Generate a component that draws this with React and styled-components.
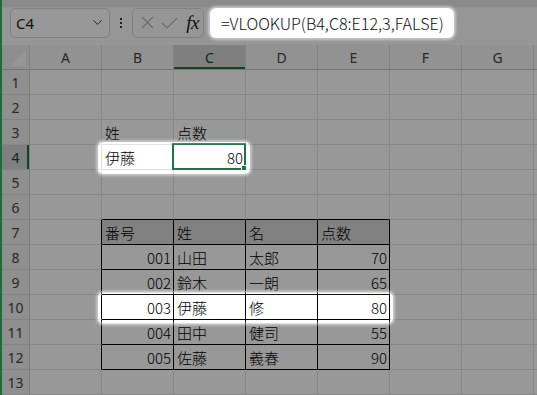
import React from "react";
import styled, { createGlobalStyle } from "styled-components";
import { ChevronDown } from "lucide-react";

const COLUMNS = ["A", "B", "C", "D", "E", "F", "G", ""];
const ROW_COUNT = 13;
const GREEN = "#217346";

// sheet contents, keyed by cell address
const values = {
  B3: { v: "姓" },
  C3: { v: "点数" },
  B4: { v: "伊藤" },
  C4: { v: "80", right: true },
  B7: { v: "番号" },
  C7: { v: "姓" },
  D7: { v: "名" },
  E7: { v: "点数" },
};

const scores = [
  ["001", "山田", "太郎", "70"],
  ["002", "鈴木", "一朗", "65"],
  ["003", "伊藤", "修", "80"],
  ["004", "田中", "健司", "55"],
  ["005", "佐藤", "義春", "90"],
];

scores.forEach((row, i) => {
  const r = 8 + i;
  values[`B${r}`] = { v: row[0], right: true };
  values[`C${r}`] = { v: row[1] };
  values[`D${r}`] = { v: row[2] };
  values[`E${r}`] = { v: row[3], right: true };
});

// spotlight holes, in window coordinates
const spots = [
  { x: 208, y: 8, w: 244, h: 30, r: 6 },
  { x: 96, y: 142, w: 152, h: 32, r: 5 },
  { x: 96, y: 292.5, w: 295, h: 31, r: 5 },
];

const inTable = (col, row) => col >= 1 && col <= 4 && row >= 7 && row <= 12;

const GlobalStyle = createGlobalStyle`
  html, body { margin: 0; padding: 0; background: #fff; }
  body { font-family: "Noto Sans", sans-serif; }
`;

const Frame = styled.div`
  display: flex;
  width: 537px;
  height: 395px;
  overflow: hidden;
`;

const GreenEdge = styled.div`
  width: 2px;
  flex-shrink: 0;
  background: #1f6b3c;
`;

const Window = styled.div`
  position: relative;
  flex: 1;
  display: flex;
  flex-direction: column;
  background: #fcfcfc;
`;

const RibbonEdge = styled.div`
  height: 7px;
  background: #e8e8e8;
  border-bottom: 1px solid #f4f4f4;
`;

const FormulaBar = styled.div`
  height: 38px;
  box-sizing: border-box;
  display: flex;
  align-items: flex-start;
  padding-left: 8px;
`;

const NameBox = styled.div`
  width: 100px;
  height: 30px;
  box-sizing: border-box;
  border: 1px solid #d8d8d8;
  border-radius: 5px;
  background: #fff;
  display: flex;
  align-items: center;
  justify-content: space-between;
  padding: 0 4px 0 5px;
  font: 15px "Noto Sans", sans-serif;
  color: #1a1a1a;
`;

const Dots = styled.div`
  width: 2px;
  height: 30px;
  margin: 0 10px;
  display: flex;
  flex-direction: column;
  justify-content: center;
  gap: 2px;
  span {
    width: 2px;
    height: 2px;
    background: #3a3a3a;
  }
`;

const FxBox = styled.div`
  width: 72px;
  height: 30px;
  box-sizing: border-box;
  border: 1px solid #d8d8d8;
  border-radius: 5px;
  display: flex;
  align-items: center;
  padding: 0 4px 0 8px;
  gap: 7px;
`;

const FxLabel = styled.span`
  margin-left: auto;
  font: italic 19px "Liberation Serif", serif;
  color: #1a1a1a;
  letter-spacing: -0.5px;
  line-height: 1;
`;

const FormulaInput = styled.div`
  width: 244px;
  height: 30px;
  margin-left: 4px;
  box-sizing: border-box;
  background: #fff;
  border-radius: 6px;
  display: flex;
  align-items: center;
  padding-left: 13px;
  font: 300 16.1px "Noto Sans CJK JP", sans-serif;
  color: #111;
  white-space: nowrap;
`;

const Sheet = styled.div`
  display: grid;
  grid-template-columns: 28px repeat(7, 72px) 1fr;
  grid-auto-rows: 25px;
`;

const Corner = styled.div`
  position: relative;
  background: #eeeeee;
  border-right: 1px solid #dadada;
  border-bottom: 1px solid #c4c4c4;
  &::after {
    content: "";
    position: absolute;
    right: 3px;
    bottom: 3px;
    width: 0;
    height: 0;
    border-left: 16px solid transparent;
    border-bottom: 16px solid #fbfbfb;
  }
`;

const ColHead = styled.div`
  box-sizing: border-box;
  background: ${(p) => (p.$active ? "#d6d6d6" : "#f5f5f5")};
  border-right: 1px solid #dadada;
  border-bottom: 1px solid #c4c4c4;
  box-shadow: ${(p) => (p.$active ? `inset 0 -2px ${GREEN}` : "none")};
  display: flex;
  align-items: center;
  justify-content: center;
  font: 14px "Noto Sans", sans-serif;
  color: ${(p) => (p.$active ? "#0f4a2a" : "#444")};
`;

const RowHead = styled.div`
  box-sizing: border-box;
  background: ${(p) => (p.$active ? "#d6d6d6" : "#f0f0f0")};
  border-right: 1px solid #cfcfcf;
  border-bottom: 1px solid #dedede;
  box-shadow: ${(p) => (p.$active ? `inset -2px 0 ${GREEN}` : "none")};
  display: flex;
  align-items: center;
  justify-content: center;
  font: 14px "Noto Sans", sans-serif;
  color: ${(p) => (p.$active ? "#0f4a2a" : "#444")};
`;

const Cell = styled.div`
  position: relative;
  box-sizing: border-box;
  background: ${(p) => p.$fill || "#fff"};
  border-right: 1px solid ${(p) => (p.$edgeRight ? "#000" : "#e1e1e1")};
  border-bottom: 1px solid ${(p) => (p.$edgeBottom ? "#000" : "#e1e1e1")};
  display: flex;
  align-items: center;
  justify-content: ${(p) => (p.$right ? "flex-end" : "flex-start")};
  padding: 1px 2px 0 3px;
  font: 300 15px "Noto Sans CJK JP", sans-serif;
  line-height: 1;
  color: #000;
  white-space: nowrap;
`;

const Selection = styled.div`
  position: absolute;
  top: -2px;
  left: -2px;
  right: -1px;
  bottom: -1px;
  border: 2px solid ${GREEN};
  z-index: 2;
  pointer-events: none;
`;

const FillHandle = styled.div`
  position: absolute;
  right: -3px;
  bottom: -3px;
  width: 6px;
  height: 6px;
  box-sizing: border-box;
  background: ${GREEN};
  border: 1px solid #fff;
  z-index: 3;
`;

const Overlay = styled.svg`
  position: absolute;
  left: 0;
  top: 0;
  pointer-events: none;
  z-index: 10;
`;

function CrossIcon() {
  return (
    <svg width="13" height="13" viewBox="0 0 13 13">
      <path d="M1 1 L12 12 M12 1 L1 12" stroke="#b5b5b5" strokeWidth="1.2" fill="none" />
    </svg>
  );
}

function CheckIcon() {
  return (
    <svg width="17" height="12" viewBox="0 0 17 12">
      <path d="M1 6 L6 11 L16 1" stroke="#b5b5b5" strokeWidth="1.2" fill="none" />
    </svg>
  );
}

function SpotlightOverlay() {
  return (
    <Overlay width="535" height="395">
      <defs>
        <mask id="holes">
          <rect x="0" y="0" width="535" height="395" fill="#fff" />
          {spots.map((s) => (
            <rect key={`${s.x}-${s.y}`} x={s.x} y={s.y} width={s.w} height={s.h} rx={s.r} fill="#000" />
          ))}
        </mask>
        <filter id="soft" x="-10%" y="-50%" width="120%" height="200%">
          <feGaussianBlur stdDeviation="1.2" />
        </filter>
      </defs>
      <rect x="0" y="0" width="535" height="395" fill="#000" opacity="0.4" mask="url(#holes)" />
      {spots.map((s) => (
        <rect
          key={`g-${s.x}-${s.y}`}
          x={s.x - 0.5}
          y={s.y - 0.5}
          width={s.w + 1}
          height={s.h + 1}
          rx={s.r + 0.5}
          fill="none"
          stroke="#fff"
          strokeOpacity="0.55"
          strokeWidth="2.5"
          filter="url(#soft)"
        />
      ))}
    </Overlay>
  );
}

function SheetGrid() {
  const rows = [];
  for (let r = 1; r <= ROW_COUNT; r += 1) {
    rows.push(
      <RowHead key={`h${r}`} $active={r === 4}>
        {r}
      </RowHead>
    );
    COLUMNS.forEach((letter, c) => {
      const addr = `${letter}${r}`;
      const data = values[addr];
      const edgeRight = inTable(c, r) || (c === 0 && r >= 7 && r <= 12);
      const edgeBottom = inTable(c, r) || (r === 6 && c >= 1 && c <= 4);
      rows.push(
        <Cell
          key={addr || `x${r}`}
          $right={data && data.right}
          $edgeRight={edgeRight}
          $edgeBottom={edgeBottom}
          $fill={r === 7 && c >= 1 && c <= 4 ? "#d9d9d9" : undefined}
        >
          {data && data.v}
          {addr === "C4" && (
            <Selection>
              <FillHandle />
            </Selection>
          )}
        </Cell>
      );
    });
  }

  return (
    <Sheet>
      <Corner />
      {COLUMNS.map((letter, c) => (
        <ColHead key={`c${c}`} $active={letter === "C"}>
          {letter}
        </ColHead>
      ))}
      {rows}
    </Sheet>
  );
}

export default function App() {
  return (
    <>
      <GlobalStyle />
      <Frame>
        <GreenEdge />
        <Window>
          <RibbonEdge />
          <FormulaBar>
            <NameBox>
              C4
              <ChevronDown size={15} strokeWidth={1.5} color="#333" />
            </NameBox>
            <Dots>
              <span />
              <span />
              <span />
            </Dots>
            <FxBox>
              <CrossIcon />
              <CheckIcon />
              <FxLabel>fx</FxLabel>
            </FxBox>
            <FormulaInput>=VLOOKUP(B4,C8:E12,3,FALSE)</FormulaInput>
          </FormulaBar>
          <SheetGrid />
          <SpotlightOverlay />
        </Window>
      </Frame>
    </>
  );
}
